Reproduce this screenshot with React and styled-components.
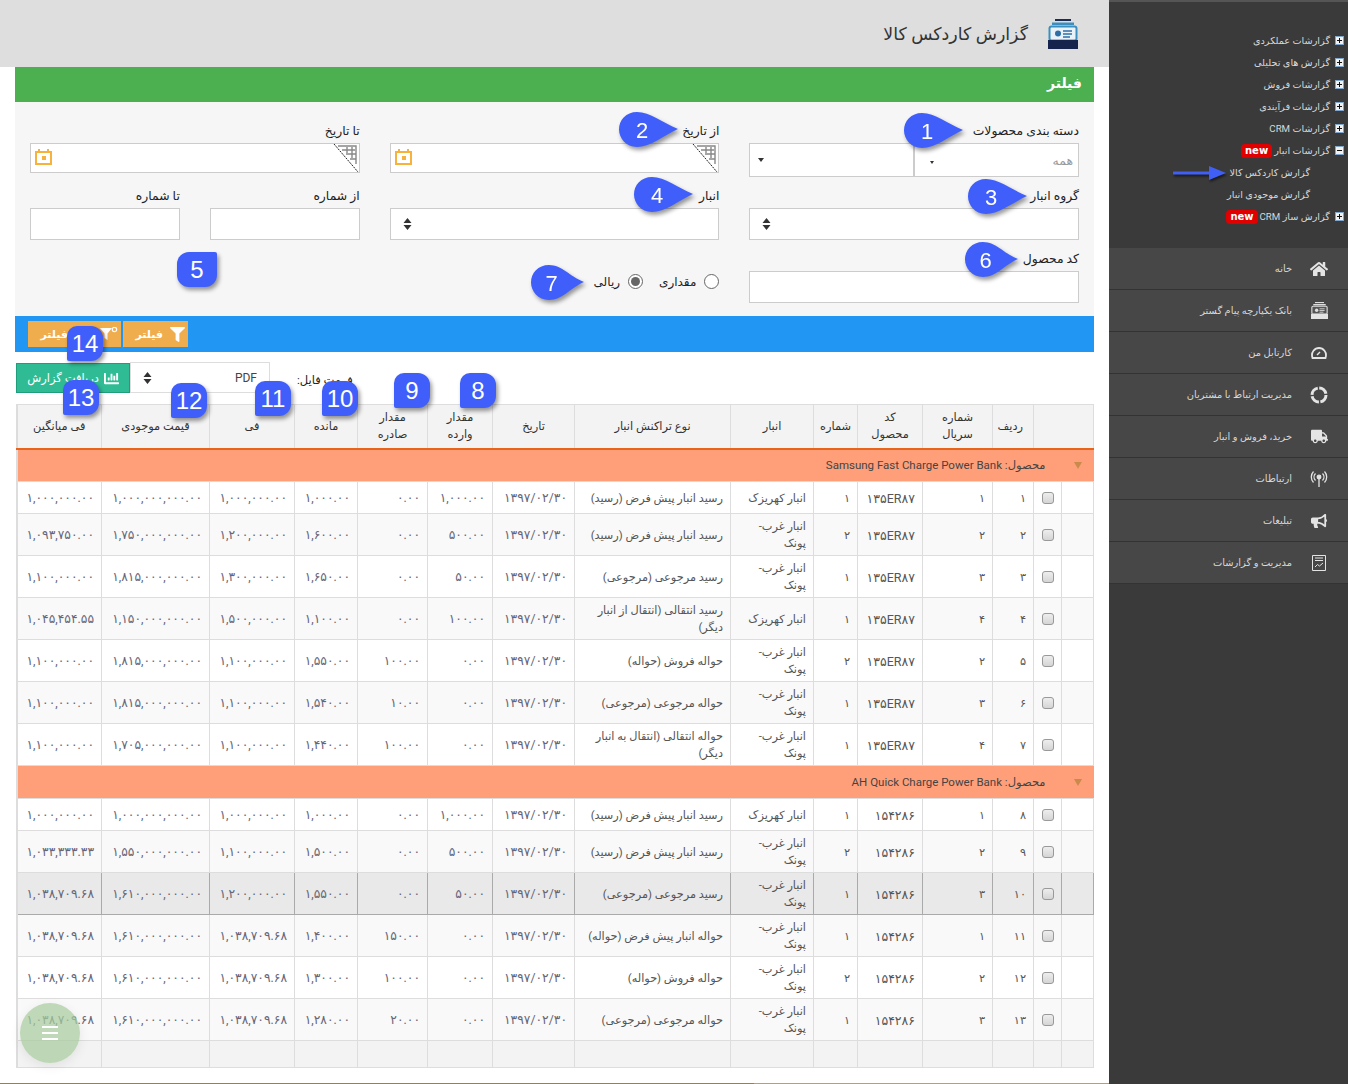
import React from 'react';
import styled, { createGlobalStyle } from 'styled-components';
import { FaHome, FaTruck, FaBullhorn, FaFilter, FaChartBar } from 'react-icons/fa';

const GlobalStyle = createGlobalStyle`
  html, body { margin: 0; padding: 0; background: #fff; }
  body { font-family: Roboto, "DejaVu Sans", sans-serif; overflow: hidden; }
  * { box-sizing: border-box; }
`;

const Page = styled.div`
  display: flex;
  width: 1348px;
  height: 1084px;
  overflow: hidden;
`;

const Sidebar = styled.aside`
  width: 239px;
  flex: none;
  background: #3a3a3a;
  color: #d8d8d8;
  border-top: 2px solid #555;
  position: relative;
`;

const Tree = styled.ul`
  list-style: none;
  margin: 0;
  height: 246px;
  padding: 27px 4px 0 0;
`;

const TreeRow = styled.li`
  display: flex;
  align-items: center;
  gap: 5px;
  height: 22px;
  font-size: 9.7px;
  padding-right: ${(p) => (p.$child ? '34px' : '0')};
`;

const TreeBox = styled.span`
  width: 9px;
  height: 9px;
  flex: none;
  position: relative;
  background: #f2f2f2;
  border: 1px solid #7ea6cf;
  &::before {
    content: '';
    position: absolute;
    left: 1px;
    right: 1px;
    top: 3px;
    height: 1px;
    background: #111;
  }
  &::after {
    content: '';
    display: ${(p) => (p.$open ? 'none' : 'block')};
    position: absolute;
    top: 1px;
    bottom: 1px;
    left: 3px;
    width: 1px;
    background: #111;
  }
`;

const NewTag = styled.span`
  background: #e00000;
  color: #fff;
  font-family: "DejaVu Sans", sans-serif;
  font-weight: 700;
  font-size: 10px;
  line-height: 13px;
  height: 14px;
  padding: 0 4px;
  border-radius: 4px;
  margin: 2px -3px 0 0;
`;

const Pointer = styled.svg`
  position: absolute;
  left: 64px;
  top: 164px;
  filter: drop-shadow(1px 2px 1px rgba(0, 0, 0, 0.55));
`;

const NavItem = styled.div`
  display: flex;
  align-items: center;
  height: 42px;
  background: #474747;
  border-bottom: 1px solid #333;
  font-size: 9.9px;
  color: #d8d8d8;
`;

const NavIcon = styled.span`
  width: 50px;
  padding-right: 8px;
  display: flex;
  align-items: center;
  justify-content: center;
  flex: none;
  color: #e4e4e4;
  svg { display: block; }
`;

const NavText = styled.span`
  margin-right: 6px;
`;

const Main = styled.main`
  width: 1109px;
  flex: none;
  height: 1084px;
  position: relative;
  background: #fff;
  &::after {
    content: '';
    position: absolute;
    left: 0;
    right: 0;
    bottom: 0;
    height: 1px;
    background: linear-gradient(90deg, #a07f3c 0, #a07f3c 68%, #b5a070 68%, #b5a070 100%);
  }
`;

const TitleBar = styled.header`
  height: 67px;
  background: #dedede;
  display: flex;
  align-items: center;
  gap: 20px;
  padding-right: 31px;
`;

const Title = styled.h1`
  margin: 0;
  font-size: 17.4px;
  font-weight: 400;
  color: #333;
`;

const Content = styled.div`
  padding: 0 15px;
`;

const GreenBar = styled.div`
  height: 35px;
  background: #4caf50;
  color: #fff;
  font-size: 14px;
  font-weight: 700;
  line-height: 33px;
  padding-right: 12px;
`;

const FilterPanel = styled.section`
  height: 214px;
  background: #f6f6f6;
  padding: 20px 15px 0;
  display: grid;
  grid-template-columns: repeat(3, 1fr);
  grid-auto-rows: min-content;
  gap: 10px 30px;
`;

const Field = styled.div`
  min-width: 0;
`;

const Label = styled.label`
  display: block;
  height: 21px;
  font-size: 12.4px;
  line-height: 17px;
  color: #222;
`;

const Input = styled.div`
  height: ${(p) => p.$h || 32}px;
  background: #fff;
  border: 1px solid #ccc;
  position: relative;
  display: flex;
  align-items: center;
  justify-content: flex-end;
  padding: 0 ${(p) => p.$pad ?? 12}px;
`;

const Split = styled.div`
  display: flex;
  height: 34px;
  border: 1px solid #ccc;
  background: #fff;
`;

const SplitPart = styled.div`
  width: ${(p) => p.$w}px;
  flex: none;
  display: flex;
  align-items: center;
  justify-content: space-between;
  padding: 0 5px 0 ${(p) => p.$pl}px;
  font-size: 12.5px;
  color: #999;
  border-left: ${(p) => (p.$divided ? '2px solid #ccc' : 'none')};
`;

const Triangle = styled.span`
  width: 0;
  height: 0;
  border-left: ${(p) => p.$s}px solid transparent;
  border-right: ${(p) => p.$s}px solid transparent;
  border-top: ${(p) => p.$s + 1}px solid #333;
  margin-top: ${(p) => p.$mt || 0}px;
`;

const TwoInputs = styled.div`
  display: grid;
  grid-template-columns: 1fr 1fr;
  gap: 30px;
`;

const CornerMark = styled.svg`
  position: absolute;
  right: 0;
  top: 0;
`;

const CalendarSvg = styled.svg`
  margin-bottom: 3px;
`;

const RadioRow = styled.div`
  display: flex;
  align-items: center;
  height: 32px;
  margin-top: 16px;
  font-size: 12px;
  color: #222;
`;

const Radio = styled.input`
  appearance: none;
  width: 15px;
  height: 15px;
  margin: 0 0 0 8px;
  border: 1px solid #666;
  border-radius: 50%;
  background: #fff;
  position: relative;
  top: -1px;
  &:checked::after {
    content: '';
    position: absolute;
    inset: 2px;
    border-radius: 50%;
    background: #666;
  }
`;

const RadioLabel = styled.label`
  display: flex;
  align-items: center;
  margin-left: 16px;
`;

const BlueBar = styled.div`
  height: 36px;
  background: #2196f3;
  display: flex;
  justify-content: flex-end;
  align-items: flex-start;
  gap: 2px;
  padding: 5px 0 0 13px;
`;

const OrangeButton = styled.button`
  height: 26px;
  width: ${(p) => p.$w}px;
  background: #f0ad4e;
  color: #fff;
  border: 0;
  font: 700 11px Roboto, "DejaVu Sans", sans-serif;
  display: flex;
  align-items: center;
  gap: ${(p) => p.$gap}px;
  padding: 0 3px 0 0;
`;

const ReportRow = styled.div`
  height: 52px;
  display: flex;
  justify-content: flex-end;
  padding: 10px 0 0 1px;
`;

const FormatLabel = styled.span`
  font-size: 11.5px;
  color: #222;
  line-height: 36px;
  margin-left: 27px;
`;

const FormatSelect = styled.div`
  width: 140px;
  height: 31px;
  border: 1px solid #ddd;
  background: #fff;
  display: flex;
  align-items: center;
  justify-content: space-between;
  padding: 0 12px;
  font-size: 12px;
  color: #444;
`;

const ReportButton = styled.button`
  width: 114px;
  height: 30px;
  margin-top: 1px;
  background: #2fbc95;
  border: 1px solid #1f9e7c;
  color: #fff;
  font: 400 11.5px Roboto, "DejaVu Sans", sans-serif;
  display: flex;
  align-items: center;
  justify-content: center;
  gap: 5px;
  padding: 0;
`;

const Table = styled.table`
  width: 1078px;
  table-layout: fixed;
  border-collapse: collapse;
  border-left: 2px solid #ddd;
  font-size: 11.3px;
  color: #555;
`;

const HeadCell = styled.th`
  background: #f3f3f3;
  border: 1px solid #ddd;
  border-bottom: 2px solid #e8641b;
  font-size: 11.4px;
  font-weight: 400;
  color: #333;
  height: 44px;
  line-height: 17px;
  padding: 0 ${(p) => p.$pad ?? 10}px;
`;

const GroupCell = styled.td`
  background: #ff9f7a;
  height: 33px;
  color: #444;
  font-size: 11.5px;
  padding: 0 12px 0 0;
  border-bottom: 1px solid #ddd;
`;

const GroupInner = styled.div`
  display: flex;
  align-items: center;
`;

const GroupCaret = styled.span`
  width: 0;
  height: 0;
  border-left: 4px solid transparent;
  border-right: 4px solid transparent;
  border-top: 7px solid #c98a4a;
  margin-left: 28px;
`;

const Row = styled.tr`
  height: ${(p) => (p.$tall ? 42 : 32)}px;
  background: ${(p) => (p.$active ? '#e9e9e9' : p.$even ? '#f9f9f9' : '#fff')};
  td { border-color: ${(p) => (p.$active ? '#aaa' : '#ddd')}; }
`;

const Cell = styled.td`
  border: 1px solid #ddd;
  padding: 1px 7px 0;
  line-height: 17px;
  text-align: right;
`;

const NumCell = styled(Cell)`
  font-size: 12.3px;
  color: #666678;
  white-space: nowrap;
`;

const CodeCell = styled(Cell)`
  font-size: 12.5px;
  white-space: nowrap;
`;

const Check = styled.input`
  appearance: none;
  display: block;
  width: 12px;
  height: 12px;
  margin: 0 auto;
  border: 1px solid #999;
  border-radius: 3px;
  background: linear-gradient(#eee, #d5d5d5);
`;

const FootCell = styled.td`
  background: #f3f3f3;
  border: 1px solid #ddd;
  height: 27px;
`;

const Bubble = styled.svg`
  position: absolute;
  left: ${(p) => p.$x}px;
  top: ${(p) => p.$y}px;
  filter: drop-shadow(2px 3px 2px rgba(0, 0, 0, 0.4));
  overflow: visible;
  font-family: "Liberation Sans", sans-serif;
`;

const Square = styled.div`
  position: absolute;
  left: ${(p) => p.$x}px;
  top: ${(p) => p.$y}px;
  width: ${(p) => p.$w || 36}px;
  height: 35px;
  background: #405ffa;
  color: #fff;
  font: 24px/35px "Liberation Sans", sans-serif;
  text-align: center;
  border-radius: ${(p) => p.$radius || '10px 12px 12px 2px'};
  box-shadow: 2px 3px 4px rgba(0, 0, 0, 0.4);
`;

const Fab = styled.div`
  position: absolute;
  left: 20px;
  top: 1003px;
  width: 60px;
  height: 60px;
  border-radius: 50%;
  background: rgba(167, 204, 158, 0.72);
  box-shadow: 0 3px 12px rgba(0, 0, 0, 0.08);
  display: flex;
  flex-direction: column;
  align-items: center;
  justify-content: center;
  gap: 4px;
  span {
    width: 16px;
    height: 2px;
    background: #fff;
  }
`;

const TearDrop = ({ x, y, n, w = 59 }) => (
  <Bubble $x={x} $y={y} width={w} height="35" viewBox={`0 0 ${w} 35`}>
    <path d={`M18 0C31 0 ${w - 15} 11 ${w} 17C${w - 15} 24 31 35 18 35C7 35 0 26 0 17.500C0 8 7 0 18 0Z`} fill="#405ffa" />
    <text x={w * 0.39} y="26" fill="#fff" fontSize="22" textAnchor="middle">{n}</text>
  </Bubble>
);

const UpDown = () => (
  <svg width="9" height="12" viewBox="0 0 9 12">
    <path d="M4.500 0L8.500 5H.5ZM4.500 12L.5 7H8.500Z" fill="#333" />
  </svg>
);

const CalendarIcon = () => (
  <CalendarSvg width="17" height="17" viewBox="0 0 17 17">
    <path d="M1 4H16V16H1ZM4 1V4M13 1V4" fill="none" stroke="#f7b23b" strokeWidth="2" />
    <rect x="7" y="8" width="4" height="4" fill="#f7b23b" />
  </CalendarSvg>
);

const DateCorner = () => (
  <CornerMark width="26" height="30" viewBox="0 0 26 30">
    <path d="M1 0L25 28" stroke="#222" strokeWidth="1" strokeDasharray="2 1" fill="none" />
    <path d="M5 2H23V20M9 6H22M13 10H23M17 15H23M14 3V9M19 3V14" stroke="#888" strokeWidth="1.400" fill="none" />
  </CornerMark>
);

const DateInput = () => (
  <Input $h={30} $pad={4}>
    <DateCorner />
    <CalendarIcon />
  </Input>
);

const SelectInput = ({ h }) => (
  <Input $h={h}>
    <UpDown />
  </Input>
);

const BankIcon = ({ size, top, band, box, base, dot }) => (
  <svg width={size} height={size} viewBox="0 0 30 30">
    <rect x="7" y="0" width="16" height="2" fill={top} />
    <rect x="4" y="3.500" width="22" height="2.500" fill={band} />
    <rect x="1.500" y="7.500" width="27" height="14" rx="2" fill={box} stroke={band} strokeWidth="2" />
    <circle cx="10" cy="14.500" r="3" fill={dot} />
    <path d="M15 12H24M15 15H24M15 18H22" stroke={dot} strokeWidth="1.500" />
    <rect x="0" y="21" width="30" height="9" fill={base} />
  </svg>
);

const GaugeIcon = () => (
  <svg width="16" height="12" viewBox="0 0 16 12">
    <path d="M1.500 11C-.5 5 4 1 8 1S16.500 5 14.500 11Z" fill="none" stroke="currentColor" strokeWidth="1.800" />
    <path d="M6 8L9 5" stroke="currentColor" strokeWidth="1.500" />
  </svg>
);

const CycleIcon = () => (
  <svg width="18" height="18" viewBox="0 0 18 18">
    <circle cx="9" cy="9" r="7" fill="none" stroke="currentColor" strokeWidth="3" strokeDasharray="9.500 1.500" />
  </svg>
);

const AntennaIcon = () => (
  <svg width="18" height="18" viewBox="0 0 18 18" fill="none" stroke="currentColor" strokeWidth="1.300">
    <circle cx="9" cy="7" r="1.800" fill="currentColor" />
    <path d="M9 8V17" />
    <path d="M5.500 3.500A5 5 0 0 0 5.500 10.500M12.500 3.500A5 5 0 0 1 12.500 10.500" />
    <path d="M3.500 1.500A8 8 0 0 0 3.500 12.500M14.500 1.500A8 8 0 0 1 14.500 12.500" />
  </svg>
);

const ReportIcon = () => (
  <svg width="14" height="16" viewBox="0 0 14 16" fill="none" stroke="currentColor" strokeWidth="1">
    <path d="M.5.5H13.500V15.500H.5Z" />
    <path d="M3 3H11M3 5.500H11M3 12L5.500 9.500L7.500 11L11 8" />
  </svg>
);

const FilterOffIcon = () => (
  <svg width="18" height="14" viewBox="0 0 18 14">
    <path d="M0 1H12L7.500 6.500V13L4.500 11V6.500Z" fill="#fff" />
    <circle cx="14.500" cy="2.500" r="2.200" fill="none" stroke="#fff" strokeWidth="1.200" />
  </svg>
);

const treeItems = [
  { text: 'گزارشات عملکردی' },
  { text: 'گزارش های تحلیلی' },
  { text: 'گزارشات فروش' },
  { text: 'گزارشات فرآیندی' },
  { text: 'گزارشات CRM' },
  { text: 'گزارشات انبار', open: true, isNew: true },
  { text: 'گزارش کاردکس کالا', child: true },
  { text: 'گزارش موجودی انبار', child: true },
  { text: 'گزارش ساز CRM', isNew: true },
];

const navItems = [
  { text: 'خانه', icon: <FaHome size={18} /> },
  { text: 'بانک یکپارچه پیام گستر', icon: <BankIcon size={17} top="#ddd" band="#ddd" box="#555" base="#e4e4e4" dot="#ddd" /> },
  { text: 'کارتابل من', icon: <GaugeIcon /> },
  { text: 'مدیریت ارتباط با مشتریان', icon: <CycleIcon /> },
  { text: 'خرید، فروش و انبار', icon: <FaTruck size={17} /> },
  { text: 'ارتباطات', icon: <AntennaIcon /> },
  { text: 'تبلیغات', icon: <FaBullhorn size={16} /> },
  { text: 'مدیریت و گزارشات', icon: <ReportIcon /> },
];

const COLS = [32, 28, 41, 70, 65, 44, 83, 156, 82, 65, 70, 63, 85, 108, 85];

const KAHRIZAK = 'انبار کهریزک';
const GHARB = 'انبار غرب- پونک';
const RECEIPT_DEF = 'رسید انبار پیش فرض (رسید)';
const RECEIPT_RET = 'رسید مرجوعی (مرجوعی)';
const ISSUE_SALE = 'حواله فروش (حواله)';
const ISSUE_RET = 'حواله مرجوعی (مرجوعی)';

const group1 = [
  ['۱', '۱', '۱', KAHRIZAK, RECEIPT_DEF, '۱,۰۰۰.۰۰', '۰.۰۰', '۱,۰۰۰.۰۰', '۱,۰۰۰,۰۰۰.۰۰', '۱,۰۰۰,۰۰۰,۰۰۰.۰۰', '۱,۰۰۰,۰۰۰.۰۰'],
  ['۲', '۲', '۲', GHARB, RECEIPT_DEF, '۵۰۰.۰۰', '۰.۰۰', '۱,۶۰۰.۰۰', '۱,۲۰۰,۰۰۰.۰۰', '۱,۷۵۰,۰۰۰,۰۰۰.۰۰', '۱,۰۹۳,۷۵۰.۰۰'],
  ['۳', '۳', '۱', GHARB, RECEIPT_RET, '۵۰.۰۰', '۰.۰۰', '۱,۶۵۰.۰۰', '۱,۳۰۰,۰۰۰.۰۰', '۱,۸۱۵,۰۰۰,۰۰۰.۰۰', '۱,۱۰۰,۰۰۰.۰۰'],
  ['۴', '۴', '۱', KAHRIZAK, 'رسید انتقالی (انتقال از انبار دیگر)', '۱۰۰.۰۰', '۰.۰۰', '۱,۱۰۰.۰۰', '۱,۵۰۰,۰۰۰.۰۰', '۱,۱۵۰,۰۰۰,۰۰۰.۰۰', '۱,۰۴۵,۴۵۴.۵۵'],
  ['۵', '۲', '۲', GHARB, ISSUE_SALE, '۰.۰۰', '۱۰۰.۰۰', '۱,۵۵۰.۰۰', '۱,۱۰۰,۰۰۰.۰۰', '۱,۸۱۵,۰۰۰,۰۰۰.۰۰', '۱,۱۰۰,۰۰۰.۰۰'],
  ['۶', '۳', '۱', GHARB, ISSUE_RET, '۰.۰۰', '۱۰.۰۰', '۱,۵۴۰.۰۰', '۱,۱۰۰,۰۰۰.۰۰', '۱,۸۱۵,۰۰۰,۰۰۰.۰۰', '۱,۱۰۰,۰۰۰.۰۰'],
  ['۷', '۴', '۱', GHARB, 'حواله انتقالی (انتقال به انبار دیگر)', '۰.۰۰', '۱۰۰.۰۰', '۱,۴۴۰.۰۰', '۱,۱۰۰,۰۰۰.۰۰', '۱,۷۰۵,۰۰۰,۰۰۰.۰۰', '۱,۱۰۰,۰۰۰.۰۰'],
];

const group2 = [
  ['۸', '۱', '۱', KAHRIZAK, RECEIPT_DEF, '۱,۰۰۰.۰۰', '۰.۰۰', '۱,۰۰۰.۰۰', '۱,۰۰۰,۰۰۰.۰۰', '۱,۰۰۰,۰۰۰,۰۰۰.۰۰', '۱,۰۰۰,۰۰۰.۰۰'],
  ['۹', '۲', '۲', GHARB, RECEIPT_DEF, '۵۰۰.۰۰', '۰.۰۰', '۱,۵۰۰.۰۰', '۱,۱۰۰,۰۰۰.۰۰', '۱,۵۵۰,۰۰۰,۰۰۰.۰۰', '۱,۰۳۳,۳۳۳.۳۳'],
  ['۱۰', '۳', '۱', GHARB, RECEIPT_RET, '۵۰.۰۰', '۰.۰۰', '۱,۵۵۰.۰۰', '۱,۲۰۰,۰۰۰.۰۰', '۱,۶۱۰,۰۰۰,۰۰۰.۰۰', '۱,۰۳۸,۷۰۹.۶۸'],
  ['۱۱', '۱', '۱', GHARB, 'حواله انبار پیش فرض (حواله)', '۰.۰۰', '۱۵۰.۰۰', '۱,۴۰۰.۰۰', '۱,۰۳۸,۷۰۹.۶۸', '۱,۶۱۰,۰۰۰,۰۰۰.۰۰', '۱,۰۳۸,۷۰۹.۶۸'],
  ['۱۲', '۲', '۲', GHARB, ISSUE_SALE, '۰.۰۰', '۱۰۰.۰۰', '۱,۳۰۰.۰۰', '۱,۰۳۸,۷۰۹.۶۸', '۱,۶۱۰,۰۰۰,۰۰۰.۰۰', '۱,۰۳۸,۷۰۹.۶۸'],
  ['۱۳', '۳', '۱', GHARB, ISSUE_RET, '۰.۰۰', '۲۰.۰۰', '۱,۲۸۰.۰۰', '۱,۰۳۸,۷۰۹.۶۸', '۱,۶۱۰,۰۰۰,۰۰۰.۰۰', '۱,۰۳۸,۷۰۹.۶۸'],
];

const DataRow = ({ data, code, index, active }) => {
  const [row, serial, num, store, type, input, output, rest, fee, value, avg] = data;
  return (
    <Row $tall={store === GHARB || type.length > 30} $even={index % 2 === 1} $active={active}>
      <Cell />
      <Cell><Check type="checkbox" readOnly /></Cell>
      <Cell>{row}</Cell>
      <Cell>{serial}</Cell>
      <CodeCell>{code}</CodeCell>
      <Cell>{num}</Cell>
      <Cell>{store}</Cell>
      <Cell>{type}</Cell>
      <NumCell>۱۳۹۷/۰۲/۳۰</NumCell>
      <NumCell>{input}</NumCell>
      <NumCell>{output}</NumCell>
      <NumCell>{rest}</NumCell>
      <NumCell>{fee}</NumCell>
      <NumCell>{value}</NumCell>
      <NumCell>{avg}</NumCell>
    </Row>
  );
};

const GroupRow = ({ name }) => (
  <tr>
    <GroupCell colSpan={15}>
      <GroupInner>
        <GroupCaret />
        <span>محصول: {name}</span>
      </GroupInner>
    </GroupCell>
  </tr>
);

export default function App() {
  return (
    <Page dir="rtl">
      <GlobalStyle />
      <Sidebar>
        <Tree>
          {treeItems.map((item) => (
            <TreeRow key={item.text} $child={item.child}>
              {!item.child && <TreeBox $open={item.open} />}
              <span>{item.text}</span>
              {item.isNew && <NewTag dir="ltr">new</NewTag>}
            </TreeRow>
          ))}
        </Tree>
        {navItems.map((item) => (
          <NavItem key={item.text}>
            <NavIcon>{item.icon}</NavIcon>
            <NavText>{item.text}</NavText>
          </NavItem>
        ))}
        <Pointer width="54" height="14" viewBox="0 0 54 14">
          <path d="M1 7H38" stroke="#3f5ff5" strokeWidth="3" strokeLinecap="round" />
          <path d="M36 0L53 7L36 14Z" fill="#3f5ff5" />
        </Pointer>
      </Sidebar>

      <Main>
        <TitleBar>
          <BankIcon size={30} top="#1c2c55" band="#3a8fc0" box="#e8f2f8" base="#16244d" dot="#2f6fa8" />
          <Title>گزارش کاردکس کالا</Title>
        </TitleBar>
        <Content>
          <GreenBar>فیلتر</GreenBar>
          <FilterPanel>
            <Field>
              <Label>دسته بندی محصولات</Label>
              <Split>
                <SplitPart $w={165} $pl={15} $divided>
                  <span>همه</span>
                  <Triangle $s={2} $mt={4} />
                </SplitPart>
                <SplitPart $w={163} $pl={8}>
                  <span />
                  <Triangle $s={3} />
                </SplitPart>
              </Split>
            </Field>
            <Field>
              <Label>از تاریخ</Label>
              <DateInput />
            </Field>
            <Field>
              <Label>تا تاریخ</Label>
              <DateInput />
            </Field>
            <Field>
              <Label>گروه انبار</Label>
              <SelectInput />
            </Field>
            <Field>
              <Label>انبار</Label>
              <SelectInput />
            </Field>
            <TwoInputs>
              <Field>
                <Label>از شماره</Label>
                <Input />
              </Field>
              <Field>
                <Label>تا شماره</Label>
                <Input />
              </Field>
            </TwoInputs>
            <Field>
              <Label>کد محصول</Label>
              <Input />
            </Field>
            <RadioRow>
              <RadioLabel>
                <Radio type="radio" name="mode" readOnly />
                مقداری
              </RadioLabel>
              <RadioLabel>
                <Radio type="radio" name="mode" defaultChecked />
                ریالی
              </RadioLabel>
            </RadioRow>
          </FilterPanel>
          <BlueBar>
            <OrangeButton $w={65} $gap={7}><FaFilter size={15} />فیلتر</OrangeButton>
            <OrangeButton $w={93} $gap={32}><FilterOffIcon />فیلتر</OrangeButton>
          </BlueBar>
          <ReportRow>
            <FormatLabel>فرمت فایل:</FormatLabel>
            <FormatSelect>
              <span>PDF</span>
              <UpDown />
            </FormatSelect>
            <ReportButton><FaChartBar size={15} />دریافت گزارش</ReportButton>
          </ReportRow>
          <Table>
            <colgroup>
              {COLS.map((w, i) => <col key={i} style={{ width: w }} />)}
            </colgroup>
            <thead>
              <tr>
                <HeadCell colSpan={2} />
                <HeadCell>ردیف</HeadCell>
                <HeadCell>شماره سریال</HeadCell>
                <HeadCell>کد محصول</HeadCell>
                <HeadCell $pad={0}>شماره</HeadCell>
                <HeadCell>انبار</HeadCell>
                <HeadCell>نوع تراکنش انبار</HeadCell>
                <HeadCell>تاریخ</HeadCell>
                <HeadCell>مقدار وارده</HeadCell>
                <HeadCell>مقدار صادره</HeadCell>
                <HeadCell>مانده</HeadCell>
                <HeadCell>فی</HeadCell>
                <HeadCell>قیمت موجودی</HeadCell>
                <HeadCell>فی میانگین</HeadCell>
              </tr>
            </thead>
            <tbody>
              <GroupRow name="Samsung Fast Charge Power Bank" />
              {group1.map((d, i) => <DataRow key={d[0]} data={d} code="۱۳۵ER۸۷" index={i} />)}
              <GroupRow name="AH Quick Charge Power Bank" />
              {group2.map((d, i) => <DataRow key={d[0]} data={d} code="۱۵۴۲۸۶" index={i} active={d[0] === '۱۰'} />)}
              <tr>
                {COLS.map((w, i) => <FootCell key={i} />)}
              </tr>
            </tbody>
          </Table>
        </Content>

        <TearDrop x={904} y={113} n="1" />
        <TearDrop x={619} y={112} n="2" />
        <TearDrop x={968} y={179} n="3" />
        <TearDrop x={634} y={177} n="4" />
        <TearDrop x={965} y={242} n="6" w={53} />
        <TearDrop x={531} y={265} n="7" w={53} />
        <Square $x={177} $y={252} $w={40} $radius="12px 2px 12px 12px">5</Square>
        <Square $x={460} $y={373}>8</Square>
        <Square $x={394} $y={373}>9</Square>
        <Square $x={322} $y={381}>10</Square>
        <Square $x={255} $y={381}>11</Square>
        <Square $x={171} $y={383}>12</Square>
        <Square $x={63} $y={380}>13</Square>
        <Square $x={67} $y={326}>14</Square>
        <Fab><span /><span /><span /></Fab>
      </Main>
    </Page>
  );
}
